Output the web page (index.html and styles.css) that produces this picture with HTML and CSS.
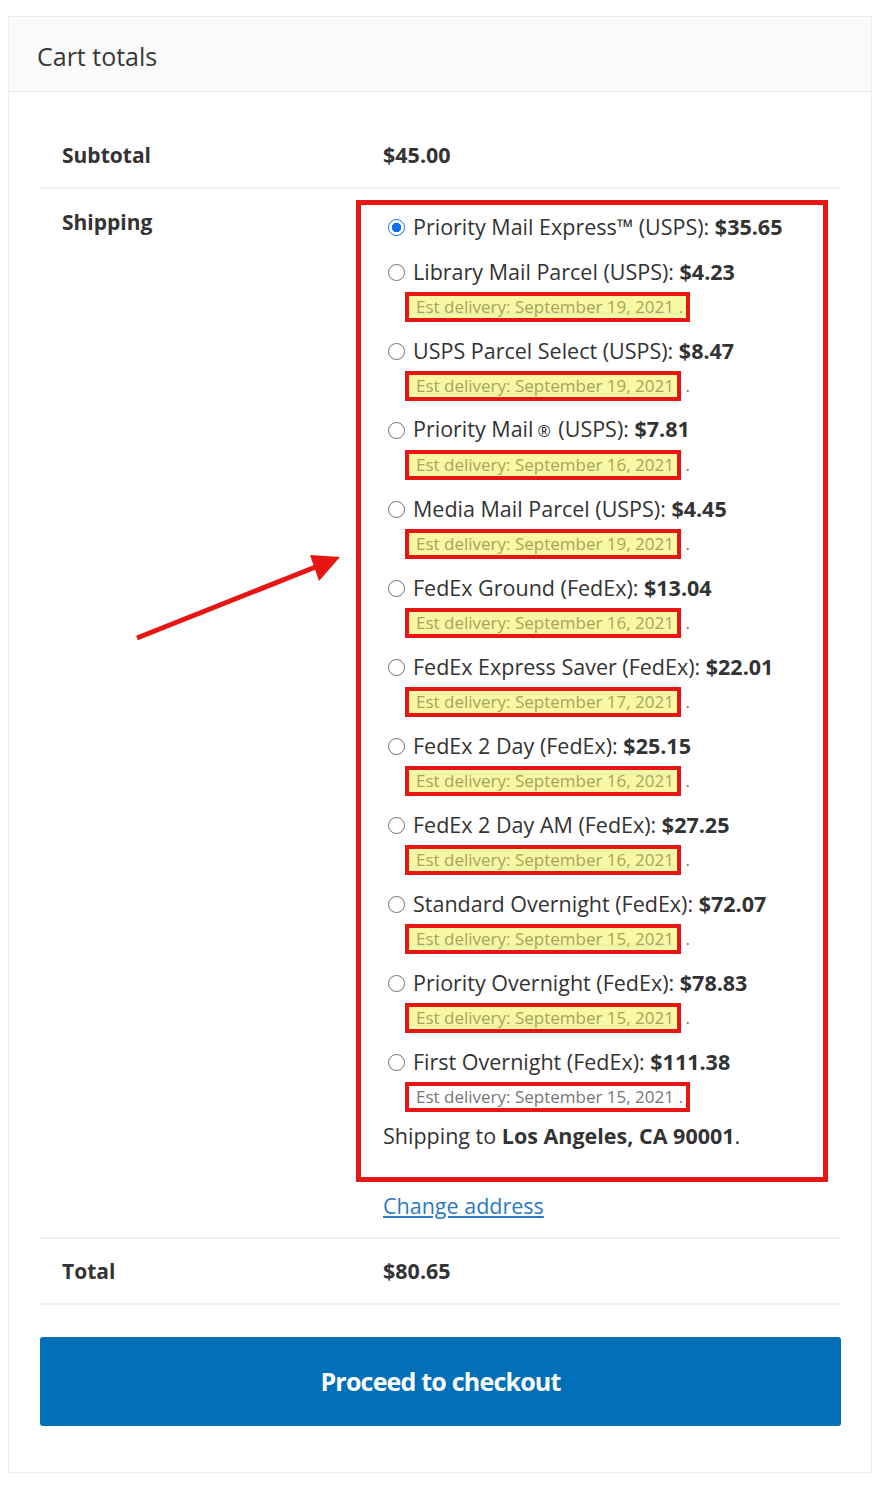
FILE: index.html
```html
<!DOCTYPE html>
<html lang="en">
<head>
    <meta charset="UTF-8">
    <link rel="stylesheet" href="styles.css">
</head>
<body>
    <div class="cart-totals">
        <h2 class="cart-title">Cart totals</h2>
        <div class="cart-body">
            <div class="totals-row">
                <div class="totals-label">Subtotal</div>
                <div class="totals-value"><strong>$45.00</strong></div>
            </div>

            <div class="totals-row shipping-row">
                <div class="totals-label">Shipping</div>
                <div class="totals-value">
                    <div class="annot-box">
                        <ul class="shipping-methods">
                            <li>
                                <label class="method"><input type="radio" name="ship" checked> <span>Priority Mail Express™ (USPS): <b>$35.65</b></span></label>
                            </li>
                            <li>
                                <label class="method"><input type="radio" name="ship"> <span>Library Mail Parcel (USPS): <b>$4.23</b></span></label>
                                <div class="est"><span class="est-box">Est delivery: September 19, 2021 .</span></div>
                            </li>
                            <li>
                                <label class="method"><input type="radio" name="ship"> <span>USPS Parcel Select (USPS): <b>$8.47</b></span></label>
                                <div class="est"><span class="est-box">Est delivery: September 19, 2021</span> .</div>
                            </li>
                            <li>
                                <label class="method"><input type="radio" name="ship"> <span>Priority Mail<span class="reg">®</span> (USPS): <b>$7.81</b></span></label>
                                <div class="est"><span class="est-box">Est delivery: September 16, 2021</span> .</div>
                            </li>
                            <li>
                                <label class="method"><input type="radio" name="ship"> <span>Media Mail Parcel (USPS): <b>$4.45</b></span></label>
                                <div class="est"><span class="est-box">Est delivery: September 19, 2021</span> .</div>
                            </li>
                            <li>
                                <label class="method"><input type="radio" name="ship"> <span>FedEx Ground (FedEx): <b>$13.04</b></span></label>
                                <div class="est"><span class="est-box">Est delivery: September 16, 2021</span> .</div>
                            </li>
                            <li>
                                <label class="method"><input type="radio" name="ship"> <span>FedEx Express Saver (FedEx): <b>$22.01</b></span></label>
                                <div class="est"><span class="est-box">Est delivery: September 17, 2021</span> .</div>
                            </li>
                            <li>
                                <label class="method"><input type="radio" name="ship"> <span>FedEx 2 Day (FedEx): <b>$25.15</b></span></label>
                                <div class="est"><span class="est-box">Est delivery: September 16, 2021</span> .</div>
                            </li>
                            <li>
                                <label class="method"><input type="radio" name="ship"> <span>FedEx 2 Day AM (FedEx): <b>$27.25</b></span></label>
                                <div class="est"><span class="est-box">Est delivery: September 16, 2021</span> .</div>
                            </li>
                            <li>
                                <label class="method"><input type="radio" name="ship"> <span>Standard Overnight (FedEx): <b>$72.07</b></span></label>
                                <div class="est"><span class="est-box">Est delivery: September 15, 2021</span> .</div>
                            </li>
                            <li>
                                <label class="method"><input type="radio" name="ship"> <span>Priority Overnight (FedEx): <b>$78.83</b></span></label>
                                <div class="est"><span class="est-box">Est delivery: September 15, 2021</span> .</div>
                            </li>
                            <li>
                                <label class="method"><input type="radio" name="ship"> <span>First Overnight (FedEx): <b>$111.38</b></span></label>
                                <div class="est"><span class="est-box plain">Est delivery: September 15, 2021 .</span></div>
                            </li>
                        </ul>
                        <p class="ship-dest">Shipping to <b>Los Angeles, CA 90001</b>.</p>
                    </div>
                    <a class="change-address" href="#">Change address</a>
                </div>
            </div>

            <div class="totals-row">
                <div class="totals-label">Total</div>
                <div class="totals-value"><strong>$80.65</strong></div>
            </div>

            <a class="checkout-button" href="#">Proceed to checkout</a>
        </div>

        <!-- arrow drawn over the screenshot -->
        <svg class="annot-arrow" width="220" height="120" viewBox="0 0 220 120">
            <line x1="7" y1="109" x2="188" y2="37" stroke="#e81515" stroke-width="5"/>
            <polygon points="180,26 210,28 189,52" fill="#e81515"/>
        </svg>
    </div>
</body>
</html>
```

FILE: styles.css
```css
html, body {
    margin: 0;
    padding: 0;
    background: #fff;
    color: #333;
    font-family: "Open Sans", "Noto Sans", sans-serif;
}

body {
    padding: 16px 18px 22px 8px;
}

.cart-totals {
    position: relative;
    border: 1px solid #ececec;
}

.cart-title {
    margin: 0;
    padding: 2px 28px 0 28px;
    height: 72px;
    line-height: 74px;
    background: #fafafa;
    border-bottom: 1px solid #ececec;
    font-size: 25px;
    font-weight: 400;
    color: #383838;
}

.cart-body {
    padding: 31px 30px 46px 31px;
}

.totals-row {
    display: grid;
    grid-template-columns: 316px 1fr;
    border-bottom: 2px solid #f0f0f0;
    font-size: 21.5px;
    line-height: 32px;
}

.totals-label {
    padding: 16px 22px;
    font-size: 21px;
    font-weight: 700;
}

.totals-value {
    padding: 16px 0 16px 27px;
}

.totals-value strong {
    font-weight: 700;
}

.shipping-row .totals-label {
    padding-top: 17px;
}

.shipping-row .totals-value {
    padding: 11px 13px 15px 0;
}

.annot-box {
    border: 5px solid #e81515;
    padding: 6px 0 25px 22px;
}

.shipping-methods {
    list-style: none;
    margin: 0;
    padding: 0 0 0 5px;
}

.shipping-methods li {
    margin-bottom: 13px;
}

.shipping-methods li:last-child {
    margin-bottom: 0;
}

.method {
    display: flex;
    align-items: center;
    gap: 8px;
    height: 32px;
    white-space: nowrap;
}

.method input {
    appearance: none;
    flex: none;
    margin: 0;
    width: 17px;
    height: 17px;
    border: 1.6px solid #6e6e6e;
    border-radius: 50%;
    background: #fff;
}

.method input:checked {
    border-color: #0f6ff0;
    background: radial-gradient(circle, #0f6ff0 0 4.5px, #fff 5px);
}

.reg {
    font-size: 16px;
    margin: 0 2px 0 4px;
}

.est {
    margin: 4px 0 0 28px;
    font-size: 17px;
    line-height: 22px;
    color: #777;
    white-space: nowrap;
}

.est-box {
    display: inline-block;
    margin-left: -11px;
    padding: 0 3px 0 7px;
    border: 4px solid #e81515;
    background: #f8f7a4;
    color: #a6a55c;
}

.est-box.plain {
    background: #fff;
    color: #777;
}

.ship-dest {
    margin: 8px 0 0 0;
}

.change-address {
    display: inline-block;
    margin: 8px 0 0 27px;
    color: #2a7bc4;
}

.checkout-button {
    display: block;
    margin-top: 32px;
    height: 89px;
    line-height: 89px;
    background: #0170b9;
    border-radius: 3px;
    color: #fff;
    text-align: center;
    text-decoration: none;
    font-size: 25px;
    font-weight: 700;
    letter-spacing: -0.8px;
}

.annot-arrow {
    position: absolute;
    left: 121px;
    top: 512px;
}
```
